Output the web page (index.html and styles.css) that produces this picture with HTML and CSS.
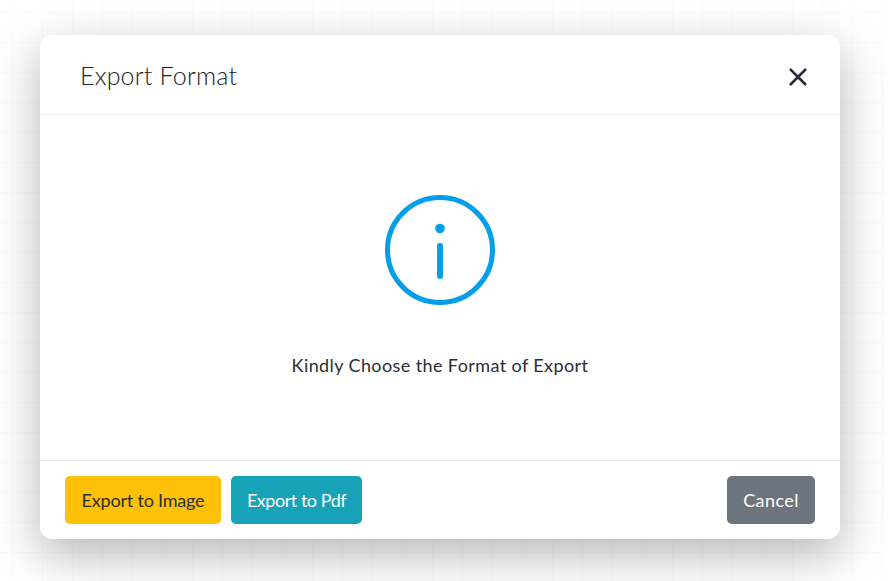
FILE: index.html
```html
<!DOCTYPE html>
<html lang="en">
<head>
    <meta charset="UTF-8">
    <title>Export Format</title>
    <link rel="stylesheet" href="styles.css">
</head>
<body>
<div class="modal">
    <div class="modal-header">
        <div class="modal-title">Export Format</div>
        <button type="button" class="close" aria-label="Close">
            <svg width="18" height="18" viewBox="0 0 18 18">
                <path d="M1 1 L17 17 M17 1 L1 17" fill="none" stroke="#252b38" stroke-width="2.5"/>
            </svg>
        </button>
    </div>
    <div class="modal-body">
        <svg class="info-icon" width="110" height="110" viewBox="0 0 110 110">
            <circle cx="55" cy="55" r="52.500" fill="none" stroke="#049fe8" stroke-width="5"/>
            <circle cx="55" cy="33.500" r="4.800" fill="#049fe8"/>
            <path d="M55 51 L55 81" fill="none" stroke="#049fe8" stroke-width="6" stroke-linecap="round"/>
        </svg>
        <p class="message">Kindly Choose the Format of Export</p>
    </div>
    <div class="modal-footer">
        <button type="button" class="btn btn-image">Export to Image</button>
        <button type="button" class="btn btn-pdf">Export to Pdf</button>
        <button type="button" class="btn btn-cancel">Cancel</button>
    </div>
</div>
</body>
</html>
```
FILE: styles.css
```css
html, body {
    height: 100%;
}
body {
    margin: 0;
    padding: 35px 48px 0 40px;
    box-sizing: border-box;
    overflow: hidden;
    font-family: "Lato", "Noto Sans", sans-serif;
    background-color: #fff;
    background-image:
        linear-gradient(#fbfbfb 1px, transparent 1px),
        linear-gradient(90deg, #fbfbfb 1px, transparent 1px);
    background-size: 30px 30px;
    background-position: 12px 12px;
}
.modal {
    width: 800px;
    height: 504px;
    display: flex;
    flex-direction: column;
    background: #fff;
    border-radius: 12px;
    box-shadow: 0 16px 48px rgba(0, 0, 0, 0.29);
}
.modal-header {
    height: 79px;
    flex: none;
    display: flex;
    align-items: center;
    justify-content: space-between;
    padding: 0 33px 0 40px;
    border-bottom: 1px solid #e9e9ec;
}
.modal-title {
    font-size: 25px;
    font-weight: 300;
    letter-spacing: 0.2px;
    color: #1d2024;
}
.close {
    display: flex;
    padding: 0;
    margin-top: 4px;
    border: none;
    background: none;
}
.modal-body {
    flex: 1;
    display: flex;
    flex-direction: column;
    align-items: center;
    padding-top: 80px;
}
.message {
    margin: 49px 0 0;
    font-size: 18px;
    letter-spacing: 0.4px;
    color: #2b2e33;
}
.modal-footer {
    flex: none;
    display: flex;
    gap: 10px;
    padding: 15px 25px;
    border-top: 1px solid #e9e9ec;
}
.btn {
    height: 48px;
    padding: 0;
    border: none;
    border-radius: 5px;
    font-family: inherit;
    font-size: 18px;
    white-space: nowrap;
}
.btn-image {
    width: 156px;
    background: #ffc107;
    color: #2b2e33;
    letter-spacing: -0.2px;
}
.btn-pdf {
    width: 131px;
    background: #17a2b8;
    color: #fff;
    letter-spacing: -0.46px;
}
.btn-cancel {
    width: 88px;
    margin-left: auto;
    background: #6c757d;
    color: #fff;
    letter-spacing: 0.4px;
}
```
